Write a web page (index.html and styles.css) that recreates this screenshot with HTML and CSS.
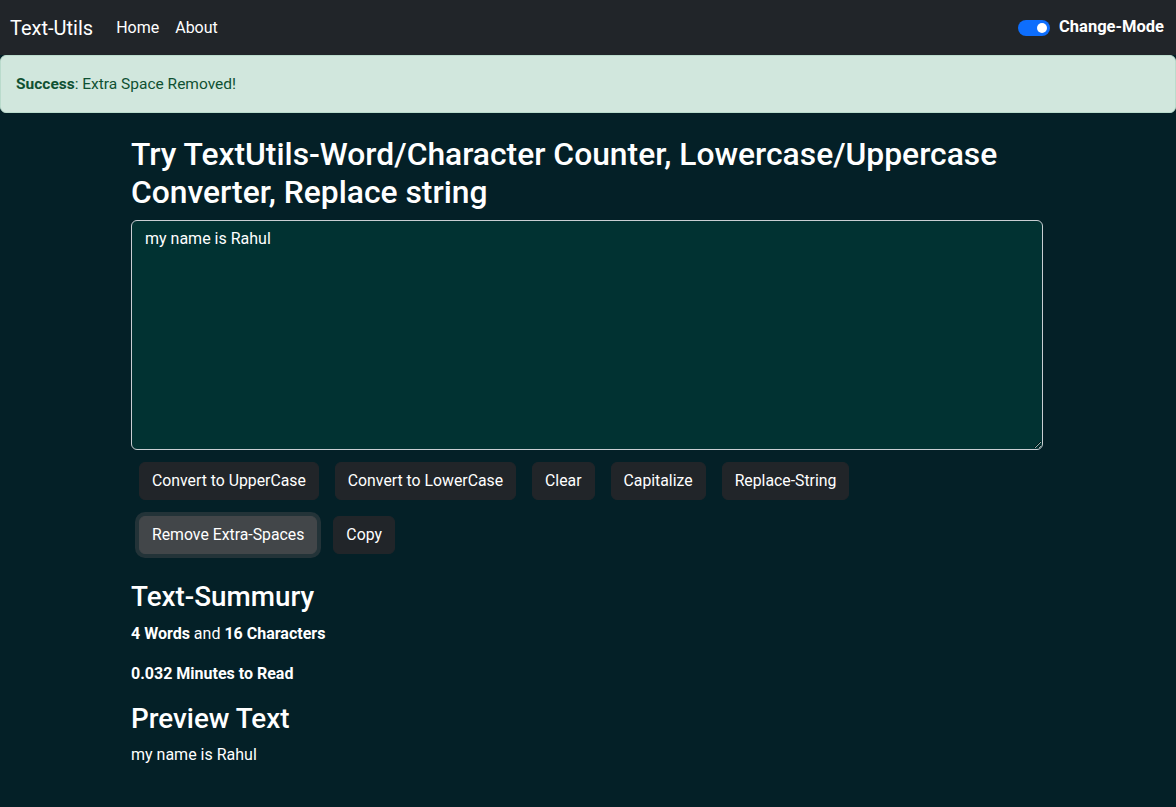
FILE: index.html
```html
<!DOCTYPE html>
<html lang="en">
<head>
<meta charset="utf-8">
<title>Text-Utils</title>
<link rel="stylesheet" href="styles.css">
</head>
<body>
<nav class="navbar">
  <div class="nav-left">
    <a class="brand" href="#">Text-Utils</a>
    <ul class="nav-links">
      <li><a href="#">Home</a></li>
      <li><a href="#">About</a></li>
    </ul>
  </div>
  <label class="mode-switch">
    <span class="switch"><span class="knob"></span></span>
    <span class="mode-label">Change-Mode</span>
  </label>
</nav>
<div class="alert"><strong>Success</strong>: Extra Space Removed!</div>
<main class="container">
  <h2 class="title">Try TextUtils-Word/Character Counter, Lowercase/Uppercase<br>Converter, Replace string</h2>
  <textarea class="textbox" rows="9">my name is Rahul</textarea>
  <div class="buttons">
    <button class="btn">Convert to UpperCase</button>
    <button class="btn">Convert to LowerCase</button>
    <button class="btn">Clear</button>
    <button class="btn">Capitalize</button>
    <button class="btn">Replace-String</button>
  </div>
  <div class="buttons">
    <button class="btn btn-focus">Remove Extra-Spaces</button>
    <button class="btn">Copy</button>
  </div>
  <h3 class="section-title summary-title">Text-Summury</h3>
  <p class="stat"><b>4 Words</b> and <b>16 Characters</b></p>
  <p class="stat"><b>0.032 Minutes to Read</b></p>
  <h3 class="section-title">Preview Text</h3>
  <p class="preview">my name is Rahul</p>
</main>
</body>
</html>
```
FILE: styles.css
```css
* { box-sizing: border-box; }
html, body { margin: 0; }
body {
  background: #042027;
  color: #ffffff;
  font-family: Roboto, "Open Sans", "Liberation Sans", sans-serif;
  font-size: 16px;
  line-height: 1.5;
}
a { color: inherit; text-decoration: none; }

.navbar {
  height: 55px;
  background: #212529;
  display: flex;
  align-items: center;
  justify-content: space-between;
  padding: 0 12px 0 10px;
}
.nav-left { display: flex; align-items: center; }
.brand { font-size: 20px; color: #fff; margin-right: 15px; }
.nav-links { display: flex; list-style: none; margin: 0; padding: 0; }
.nav-links a { display: block; padding: 8px 8px; color: #fff; font-size: 16px; }
.nav-links li:first-child a { padding-left: 8px; }
.nav-links li:last-child a { padding-right: 0; }

.mode-switch { display: flex; align-items: center; gap: 9px; }
.switch {
  width: 32px; height: 16px; border-radius: 8px;
  background: #0d6efd;
  display: flex; align-items: center; justify-content: flex-end;
  padding: 0 3px;
}
.knob { width: 10px; height: 10px; border-radius: 50%; background: #fff; }
.mode-label { font-weight: 700; color: #fff; font-size: 16.5px; }

.alert {
  height: 58px;
  background: #d1e7dd;
  color: #0f5132;
  border: 1px solid #badbcc;
  border-radius: 6px;
  padding: 17px 15px 0;
  font-size: 15.5px;
}
.alert strong { font-weight: 700; }

.container {
  width: 914px;
  margin: 0 auto;
  padding: 22px 2px 30px 0;
}
.title {
  font-size: 31.8px;
  font-weight: 500;
  line-height: 1.2;
  margin: 0 0 9px;
}
.textbox {
  display: block;
  width: 912px;
  height: 230px;
  background: #013232;
  color: #fff;
  border: 1px solid #c9ced3;
  border-radius: 6px;
  padding: 6px 13px;
  font: inherit;
  resize: vertical;
}
.buttons {
  display: flex;
  gap: 16px;
  padding: 0 8px;
  margin-top: 12px;
}
.buttons + .buttons { margin-top: 16px; }
.btn {
  background: #212529;
  color: #fff;
  border: 1px solid #212529;
  border-radius: 6px;
  padding: 6px 12px;
  height: 38px;
  font: inherit;
  font-size: 15.8px;
}
.btn-focus {
  background: #424649;
  border-color: #424649;
  box-shadow: 0 0 0 4px rgba(66, 70, 73, 0.5);
}
.section-title {
  font-size: 27.8px;
  font-weight: 500;
  line-height: 1.2;
  margin: 0 0 8px;
}
.summary-title { margin-top: 26px; }
.stat { margin: 0 0 16px; font-size: 16px; }
.stat b { font-weight: 700; }
.preview { margin: 0; font-size: 16px; }
```
